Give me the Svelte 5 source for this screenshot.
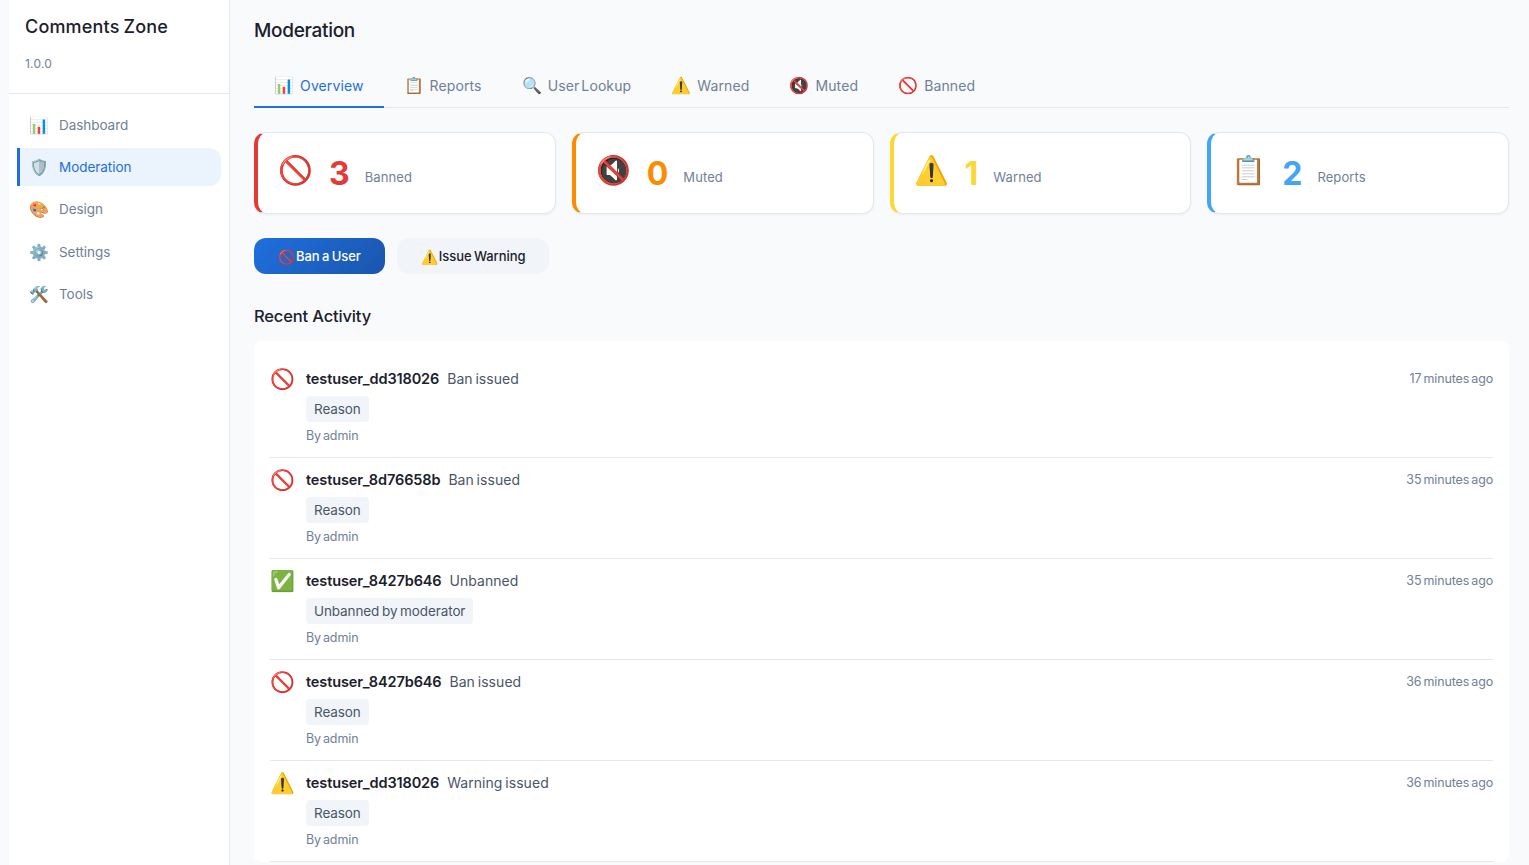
<script>
    const nav = [
        { icon: "📊", label: "Dashboard" },
        { icon: "🛡️", label: "Moderation", active: true },
        { icon: "🎨", label: "Design" },
        { icon: "⚙️", label: "Settings" },
        { icon: "🛠️", label: "Tools" },
    ];

    const tabs = [
        { icon: "📊", label: "Overview", active: true },
        { icon: "📋", label: "Reports" },
        { icon: "🔍", label: "User Lookup" },
        { icon: "⚠️", label: "Warned" },
        { icon: "🔇", label: "Muted" },
        { icon: "🚫", label: "Banned" },
    ];

    const stats = [
        { icon: "🚫", value: 3, label: "Banned", color: "#e53935" },
        { icon: "🔇", value: 0, label: "Muted", color: "#fb8c00" },
        { icon: "⚠️", value: 1, label: "Warned", color: "#fdd835" },
        { icon: "📋", value: 2, label: "Reports", color: "#42a5f5" },
    ];

    const activity = [
        { icon: "🚫", user: "testuser_dd318026", action: "Ban issued", reason: "Reason", time: "17 minutes ago" },
        { icon: "🚫", user: "testuser_8d76658b", action: "Ban issued", reason: "Reason", time: "35 minutes ago" },
        { icon: "✅", user: "testuser_8427b646", action: "Unbanned", reason: "Unbanned by moderator", time: "35 minutes ago" },
        { icon: "🚫", user: "testuser_8427b646", action: "Ban issued", reason: "Reason", time: "36 minutes ago" },
        { icon: "⚠️", user: "testuser_dd318026", action: "Warning issued", reason: "Reason", time: "36 minutes ago" },
    ];
</script>

<div class="layout">
    <aside class="sidebar">
        <div class="brand">
            <h1>Comments Zone</h1>
            <span class="version">1.0.0</span>
        </div>
        <nav class="nav">
            {#each nav as item}
                <div class="nav-item" class:active={item.active}>
                    <span class="nav-icon">{item.icon}</span>
                    <span>{item.label}</span>
                </div>
            {/each}
        </nav>
    </aside>

    <main class="main">
        <h2 class="page-title">Moderation</h2>

        <div class="tabs">
            {#each tabs as tab}
                <div class="tab" class:active={tab.active}>
                    <span class="tab-icon">{tab.icon}</span>
                    <span>{tab.label}</span>
                </div>
            {/each}
        </div>

        <div class="stats">
            {#each stats as stat}
                <div class="stat" style="--accent: {stat.color}">
                    <span class="stat-icon">{stat.icon}</span>
                    <span class="stat-value">{stat.value}</span>
                    <span class="stat-label">{stat.label}</span>
                </div>
            {/each}
        </div>

        <div class="actions">
            <button class="btn primary"><span class="btn-icon">🚫</span>Ban a User</button>
            <button class="btn secondary"><span class="btn-icon">⚠️</span>Issue Warning</button>
        </div>

        <h3 class="section-title">Recent Activity</h3>

        <div class="activity">
            {#each activity as row}
                <div class="row">
                    <span class="row-icon">{row.icon}</span>
                    <div class="row-body">
                        <div class="row-head">
                            <span class="user">{row.user}</span>
                            <span class="action">{row.action}</span>
                        </div>
                        <span class="reason">{row.reason}</span>
                        <div class="by">By admin</div>
                    </div>
                    <span class="time">{row.time}</span>
                </div>
            {/each}
        </div>
    </main>
</div>

<style>
    :global(body) {
        background: #f8fafc;
        font-family: Inter, "Noto Sans", sans-serif;
        color: #1a202c;
    }

    .layout {
        display: flex;
        height: 100vh;
        overflow: hidden;
        padding-left: 9px;
        box-sizing: border-box;
    }

    .sidebar {
        width: 221px;
        flex-shrink: 0;
        background: #fff;
        border-right: 1px solid #e2e8f0;
        box-sizing: border-box;
    }

    .brand {
        height: 94px;
        padding: 16px 16px 0;
        box-sizing: border-box;
        border-bottom: 1px solid #e2e8f0;
    }

    .brand h1 {
        margin: 0;
        font-size: 18px;
        line-height: 22px;
        font-weight: 550;
        color: #1a202c;
        letter-spacing: 0.18px;
        word-spacing: -1px;
    }

    .version {
        display: block;
        margin-top: 18px;
        font-size: 12px;
        line-height: 16px;
        letter-spacing: 0.2px;
        color: #718096;
    }

    .nav {
        display: flex;
        flex-direction: column;
        gap: 4.2px;
        padding: 12px 8px;
    }

    .nav-item {
        display: flex;
        align-items: center;
        gap: 12px;
        height: 38px;
        padding-left: 12px;
        box-sizing: border-box;
        font-size: 13.5px;
        letter-spacing: -0.05px;
        color: #718096;
        border-radius: 0 12px 12px 0;
    }

    .nav-item.active {
        background: #ebf3fc;
        color: #1f6fde;
        border-left: 3px solid #1f6fde;
        padding-left: 9px;
    }

    .nav-icon {
        width: 18px;
        font-size: 16px;
        text-align: center;
    }

    .main {
        flex: 1;
        min-width: 0;
        padding: 20px 20px 0 24px;
    }

    .page-title {
        margin: 0;
        font-size: 19px;
        line-height: 22px;
        font-weight: 550;
        letter-spacing: -0.3px;
    }

    .tabs {
        display: flex;
        margin-top: 22px;
        border-bottom: 1px solid #e2e8f0;
    }

    .tab {
        display: flex;
        align-items: center;
        gap: 6px;
        height: 44px;
        padding: 0 20px;
        box-sizing: border-box;
        font-size: 14px;
        letter-spacing: 0.1px;
        word-spacing: -2px;
        color: #718096;
        margin-bottom: -1px;
        border-bottom: 2px solid transparent;
    }

    .tab.active {
        color: #1f6fde;
        border-bottom-color: #1f6fde;
    }

    .tab-icon {
        font-size: 16px;
    }

    .stats {
        display: grid;
        grid-template-columns: repeat(4, 1fr);
        gap: 16px;
        margin-top: 24px;
    }

    .stat {
        display: flex;
        align-items: center;
        height: 82px;
        padding: 0 20px;
        box-sizing: border-box;
        background: #fff;
        border: 1px solid #e2e8f0;
        border-left: 4px solid var(--accent);
        border-radius: 12px;
        box-shadow: 0 1px 3px rgba(0, 0, 0, 0.05);
    }

    .stat-icon {
        font-size: 28px;
        line-height: 1;
        margin-top: -7px;
    }

    .stat-value {
        margin-left: 16px;
        margin-right: 15px;
        font-size: 32px;
        font-weight: 700;
        color: var(--accent);
    }

    .stat-label {
        font-size: 13px;
        letter-spacing: 0.1px;
        color: #718096;
        margin-top: 7px;
    }

    .actions {
        display: flex;
        gap: 12px;
        margin-top: 24px;
    }

    .btn {
        display: flex;
        align-items: center;
        height: 36px;
        padding: 0 24px;
        border: 0;
        border-radius: 12px;
        font-family: inherit;
        font-size: 13px;
        font-weight: 550;
        letter-spacing: -0.05px;
        word-spacing: -1px;
    }

    .btn.primary {
        background: linear-gradient(135deg, #1f6fde, #1a56ac);
        color: #fff;
    }

    .btn.secondary {
        background: #f1f5f9;
        color: #1a202c;
    }

    .btn-icon {
        font-size: 14px;
        margin-right: 1px;
    }

    .section-title {
        margin: 32px 0 0;
        font-size: 16.5px;
        line-height: 20px;
        font-weight: 550;
        letter-spacing: -0.15px;
    }

    .activity {
        margin-top: 15px;
        padding: 16px 16px 0;
        background: #fff;
        border-radius: 8px;
    }

    .row {
        display: flex;
        align-items: flex-start;
        height: 101px;
        box-sizing: border-box;
        padding-top: 11px;
        border-bottom: 1px solid #e2e8f0;
    }

    .row-icon {
        width: 36px;
        flex-shrink: 0;
        font-size: 20px;
        line-height: 22px;
    }

    .row-body {
        flex: 1;
        min-width: 0;
    }

    .row-head {
        display: flex;
        gap: 8px;
        line-height: 22px;
    }

    .user {
        font-size: 14.5px;
        font-weight: 600;
        letter-spacing: -0.12px;
        color: #1a202c;
    }

    .action {
        font-size: 14px;
        letter-spacing: 0.05px;
        word-spacing: -1.2px;
        color: #4a5568;
    }

    .reason {
        display: inline-block;
        margin-top: 6px;
        padding: 0 8px;
        height: 26px;
        line-height: 26px;
        background: #f1f5f9;
        border-radius: 4px;
        font-size: 13.5px;
        letter-spacing: -0.1px;
        word-spacing: -1px;
        color: #4a5568;
    }

    .by {
        margin-top: 5px;
        font-size: 12.5px;
        line-height: 18px;
        letter-spacing: -0.1px;
        word-spacing: -1.5px;
        color: #718096;
    }

    .time {
        margin-top: 1px;
        font-size: 12.5px;
        line-height: 20px;
        letter-spacing: -0.15px;
        word-spacing: -1.2px;
        color: #718096;
    }
</style>
